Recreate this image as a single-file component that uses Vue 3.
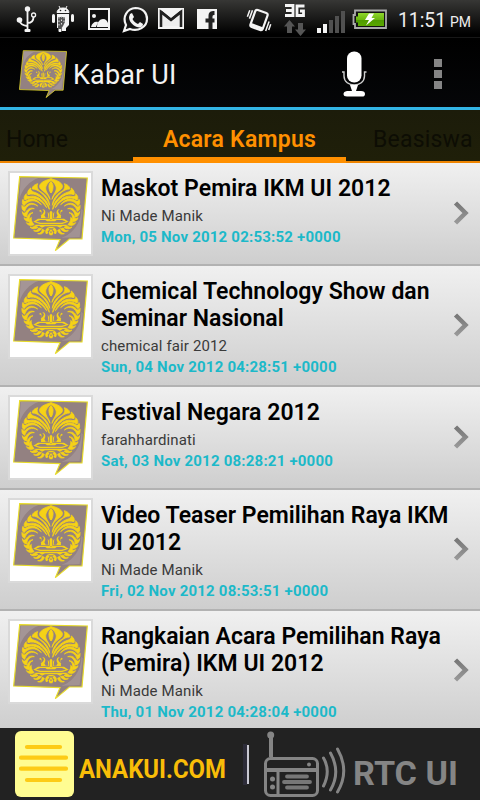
<script setup>
const items = [
  { title: ['Maskot Pemira IKM UI 2012'], author: 'Ni Made Manik', date: 'Mon, 05 Nov 2012 02:53:52 +0000' },
  { title: ['Chemical Technology Show dan', 'Seminar Nasional'], author: 'chemical fair 2012', date: 'Sun, 04 Nov 2012 04:28:51 +0000' },
  { title: ['Festival Negara 2012'], author: 'farahhardinati', date: 'Sat, 03 Nov 2012 08:28:21 +0000' },
  { title: ['Video Teaser Pemilihan Raya IKM', 'UI 2012'], author: 'Ni Made Manik', date: 'Fri, 02 Nov 2012 08:53:51 +0000' },
  { title: ['Rangkaian Acara Pemilihan Raya', '(Pemira) IKM UI 2012'], author: 'Ni Made Manik', date: 'Thu, 01 Nov 2012 04:28:04 +0000' },
]
</script>

<template>
  <div class="screen">
    <svg class="defs" width="0" height="0">
      <defs>
        <linearGradient id="chev" x1="0" y1="0" x2="0" y2="1">
          <stop offset="0" stop-color="#777" /><stop offset="1" stop-color="#999" />
        </linearGradient>
        <linearGradient id="batt" x1="0" y1="0" x2="0" y2="1">
          <stop offset="0" stop-color="#8ed62c" /><stop offset="0.5" stop-color="#6cb810" /><stop offset="0.52" stop-color="#4f9a00" /><stop offset="1" stop-color="#5aa800" />
        </linearGradient>
        <g id="half" fill="#f6d216">
          <g stroke="#f6d216" stroke-width="2.500" stroke-linejoin="round">
            <path d="M138 32C126 36 114 39 107 47C102 53 103 58 107 63C115 70 129 78 135 94C134 84 126 76 123 67C119 56 128 44 138 37Z" />
            <path d="M138 41C133 46 131 52 132 59C133 67 135 72 138 75Z" />
            <path d="M98 47C88 50 81 56 82 63C99 63 122 80 134 112C133 90 114 74 102 68C96 61 95 54 98 47Z" />
            <path d="M77 60C70 65 66 73 69 80C90 72 117 88 133 124C131 100 107 78 86 72C79 69 76 65 77 60Z" />
            <path d="M64 77C58 83 55 90 60 96C80 82 107 92 125 119C113 91 91 80 72 86C65 85 63 81 64 77Z" />
            <path d="M54 94C51 101 51 108 57 113C70 95 91 93 109 110C94 91 76 89 62 100C57 100 54 98 54 94Z" />
            <path d="M51 112C50 121 52 127 59 130C65 111 80 103 98 114C82 100 69 106 59 117C54 116 51 115 51 112Z" />
            <path d="M52 131C53 140 57 146 65 147C66 131 75 121 88 122C75 117 66 125 61 135C55 136 53 134 52 131Z" />
            <path d="M57 149C59 157 65 161 73 160C71 147 74 138 84 134C73 134 67 143 66 152C61 152 59 151 57 149Z" />
            <path d="M64 164C70 173 77 174 87 170C80 162 77 154 79 148C71 153 71 160 75 165C71 166 67 166 64 164Z" />
            <path d="M75 177C83 185 92 183 99 178L89 173C87 178 80 179 75 177Z" />
            <path d="M86 188C95 193 103 190 110 182L101 180C99 187 93 189 86 188Z" />
            <path d="M98 197C108 200 115 197 118 187L112 184C111 193 105 197 98 197Z" />
          </g>
          <path d="M105 125C101 128 105 133 109 131L108 150H132V137L128 131L130 149H122L118 142C125 132 119 121 112 124L117 129C116 136 111 140 107 142C112 134 111 126 105 125Z" />
          <path d="M138 128L134 132V154H138Z" />
          <path d="M85 161L99 152H134L138 156V160H126L121 156H105L93 161L107 164H138V168H104Z" />
          <path d="M91 170H138V175H120L111 179L103 174H91Z" />
          <path d="M138 177C127 177 125 181 122 185C119 190 122 199 126 198L130 195L128 189L134 186L130 181H138Z" />
          <path d="M138 183L134 188L131 194L134 202H138V196L135 192L138 190Z" />
        </g>
        <g id="logo">
          <path d="M44 26L247 30L231 213L193 213L151 248L165 215L26 210Z" fill="#938181" stroke="#e8dc28" stroke-width="3.5" />
          <path d="M47 30H100C74 39 51 63 43 94Z" fill="#a49596" />
          <path d="M229 122C230 163 202 200 169 209L224 207L233 127Z" fill="#a29293" />
          <use href="#half" />
          <use href="#half" transform="translate(276 0) scale(-1 1)" />
        </g>
      </defs>
    </svg>

    <header class="status">
      <svg width="480" height="38" viewBox="0 0 480 38">
        <g stroke="#f4f4f4" fill="none" stroke-width="1.8">
          <path d="M27.5 10V30M19.5 20C20 24 23 25.500 27 26M27.500 23C32 23 33.500 20 33.500 17" />
          <circle cx="33.600" cy="15" r="2" stroke-width="1.300" />
        </g>
        <g fill="#f4f4f4">
          <circle cx="27.500" cy="9" r="2.700" /><circle cx="19.500" cy="20" r="2.800" /><rect x="24.500" y="29" width="6" height="3" rx="1" />
          <path d="M57 12.500C57.500 9 60 8 63 8S68.500 9 69 12.500ZM59 6L60.500 9M67 6L65.500 9" stroke="#f4f4f4" />
          <path d="M57 14H69V25L66 28V31H62V28H57Z" />
          <rect x="52" y="14" width="3" height="9" rx="1.500" /><rect x="71" y="14" width="3" height="8" rx="1.500" /><rect x="58.500" y="27" width="3" height="5" rx="1" />
        </g>
        <path d="M58 17H65V22L63 26L61 29H58Z" fill="#555" /><path d="M59 17v10M61.500 16v10M64 17v6" stroke="#ddd" stroke-width="1" stroke-dasharray="1.5 2" />
        <circle cx="60.500" cy="10.500" r=".8" fill="#222" /><circle cx="65.500" cy="10.500" r=".8" fill="#222" />
        <rect x="89" y="9" width="20" height="20" fill="#111" stroke="#f4f4f4" stroke-width="2" />
        <circle cx="94" cy="16" r="2" fill="#f4f4f4" /><path d="M91 27C92 23 95 21 98 22L96 27ZM97 27C97 22 100 19 103 19S107 21 108 23V27Z" fill="#f4f4f4" />
        <path d="M124 31L126 25C122 17 127 8.500 135.500 8C143 8 147 13 147 19C147 27 138 32 130 29Z" fill="#151515" stroke="#f4f4f4" stroke-width="2.200" />
        <path d="M130 14L132 13L134 17L132.500 19C134 22 136 23 138 24L140 22L143 24C143 27 140 28 137 27C132 25 129 21 129 17Z" fill="#f4f4f4" />
        <rect x="158" y="8" width="26" height="21" fill="#f4f4f4" /><path d="M161 27V12L171 20L181 12V27" fill="none" stroke="#222" stroke-width="2.600" /><path d="M161 11L171 19L181 11" fill="none" stroke="#222" stroke-width="1.500" /><path d="M163 26V16L171 22L179 16V26Z" fill="#eee" />
        <rect x="197" y="9" width="20" height="20" fill="#f4f4f4" /><path d="M208.500 29V22.500H205.500V18.500H208.500V16C208.500 12 210.500 11 214.500 11V15C212.500 15 212.500 15.500 212.500 18.500H214.500V22.500H212.500V29Z" fill="#222" />
        <g transform="translate(-1 0) rotate(20 260 20)" fill="none" stroke="#f4f4f4"><rect x="253.500" y="11" width="13" height="18" rx="2" stroke-width="2.200" /><path d="M254 27H266" stroke-width="3" /><path d="M250.500 13V22M248 14V21M270 18V28M272.500 20V26" stroke-width="1.500" /></g>
        <path d="M285 5.500H293V15.500H285M286 10.500H293M304.500 6H297V15.500H303.500V11H300" fill="none" stroke="#f4f4f4" stroke-width="2.800" />
        <path d="M289.500 20L295 26.500H292V33H287V26.500H284ZM300.500 36L306 29.500H303V23H298V29.500H295Z" fill="#555" />
        <path d="M317 28h4v5h-4zM323 24h4v9h-4z" fill="#f4f4f4" /><path d="M329 20h4v13h-4zM335 16h4v17h-4zM341 11h4v22h-4z" fill="#505050" />
        <path d="M355 10.500H386V28H355V24H353.500V15H355Z" fill="#111" stroke="#aaa" stroke-width="1.800" />
        <path d="M358 13H384V26H358V22.500H356V16.500H358Z" fill="url(#batt)" /><path d="M369 13.500H374L371.500 18H375L366 25.500L369 20H365Z" fill="#fff" />
        <g fill="#eee" font-family="Roboto, sans-serif"><text x="398" y="27" font-size="20.500" textLength="48" lengthAdjust="spacingAndGlyphs">11:51</text><text x="450" y="27" font-size="14" textLength="21" lengthAdjust="spacingAndGlyphs">PM</text></g>
      </svg>
    </header>

    <div class="actionbar">
      <svg class="applogo" viewBox="24 23 225 227" preserveAspectRatio="none"><use href="#logo" /></svg>
      <h1>Kabar UI</h1>
      <svg class="mic" width="26" height="48" viewBox="0 0 26 48">
        <rect x="6" y="1.500" width="14.500" height="31" rx="7" fill="#fff" />
        <path d="M1 22H3V26C3 38 23.500 38 23.500 26V22H25.500" fill="none" stroke="#d0d0d0" stroke-width="1.400" />
        <path d="M9 35H17L15 41H20Q24 41 24 44T20 46.500H6Q2.500 46.500 2.500 44T6 41H11Z" fill="#fff" />
      </svg>
      <div class="dots"><i></i><i></i><i></i></div>
    </div>

    <nav class="tabs">
      <span class="tab home">Home</span>
      <span class="tab active">Acara Kampus</span>
      <span class="tab right">Beasiswa</span>
    </nav>

    <main class="list">
      <article v-for="item in items" :key="item.date" class="row">
        <div class="thumb"><svg width="81" height="81" viewBox="15 15 243 243"><use href="#logo" /></svg></div>
        <div class="copy">
          <h2><span v-for="line in item.title" :key="line">{{ line }}</span></h2>
          <p class="author">{{ item.author }}</p>
          <p class="date">{{ item.date }}</p>
        </div>
        <svg class="chevron" width="18" height="26" viewBox="0 0 18 26"><path d="M2.500 3L12.500 13L2.500 23" fill="none" stroke="url(#chev)" stroke-width="4.500" /></svg>
      </article>
    </main>

    <footer class="footer">
      <svg width="480" height="72" viewBox="0 0 480 72">
        <rect x="15" y="3" width="59" height="66" rx="6" fill="#fffc92" />
        <path d="M27 19H60M21 29.700H66M21 40.700H66M27 52H60" stroke="#fdcb16" stroke-width="4.200" stroke-linecap="round" />
        <text x="79" y="50" font-size="25" fill="#f9bd08" textLength="147" lengthAdjust="spacingAndGlyphs">ANAKUI.COM</text>
        <rect x="243" y="16" width="4" height="41" fill="#2d2c39" /><rect x="247" y="17" width="2" height="39" fill="#c9c9d3" />
        <g fill="none" stroke="#858585" stroke-width="3" stroke-linecap="round">
          <circle cx="270.700" cy="7" r="3.500" fill="#858585" stroke="none" /><path d="M271 9V29" stroke-width="4" stroke-linecap="butt" />
          <rect x="265.500" y="30.500" width="52" height="37" rx="5" /><path d="M266 42H317" stroke-width="4" /><path d="M278 43V67" />
          <path d="M287 48.500H307M284 54H310M287 59.500H307" stroke-width="3.800" stroke="#777" />
          <path d="M323.500 30Q331 43 323.500 58M330.500 25Q341 44 330.500 62M337.500 21Q350 43 337.500 64" />
          <g fill="#858585" stroke="none"><circle cx="309" cy="36.500" r="2" /><circle cx="272.500" cy="51" r="2.500" /><circle cx="272.500" cy="59" r="2.500" /></g>
        </g>
        <text x="353" y="57" font-size="34" fill="#858585" textLength="105" lengthAdjust="spacingAndGlyphs">RTC UI</text>
      </svg>
    </footer>
  </div>
</template>

<style>
body { margin: 0; background: #222; }
</style>

<style scoped>
.screen { width: 480px; height: 800px; overflow: hidden; display: flex; flex-direction: column; font-family: Roboto, "Noto Sans", sans-serif; background: #000; }
.defs { position: absolute; }
svg { display: block; flex: none; }
h1, h2, p { margin: 0; font-weight: 400; }
.status { height: 38px; flex: none; box-sizing: border-box; background: linear-gradient(#373735, #000 34px, #000 37px, #171717 37px); }
.actionbar { height: 69px; flex: none; display: flex; align-items: flex-start; background: linear-gradient(#000, #050608); border-bottom: 3px solid #33b5e5; }
.applogo { width: 48px; height: 48px; margin: 12px 0 0 19px; }
h1 { margin-left: 6px; width: 263px; font-size: 27px; line-height: 32px; padding-top: 21px; letter-spacing: 0.15px; color: #f3f3f3; white-space: nowrap; }
.mic { margin: 12px 0 0 5px; }
.dots { display: grid; gap: 3px; margin: 21px 0 0 67px; }
.dots i { width: 8px; height: 8px; background: #858585; }
.tabs { height: 53px; flex: none; box-sizing: border-box; display: flex; background: linear-gradient(#1c1c0a, #1f1f09); border-bottom: 2px solid #ee8400; }
.tab { font-size: 23px; line-height: 28px; padding-top: 16px; color: #0d0d04; white-space: nowrap; box-sizing: border-box; }
.home { width: 133px; padding-left: 6px; }
.active { width: 213px; height: 53px; border-bottom: 6px solid #ff9000; color: #ff9000; font-weight: 600; text-align: center; letter-spacing: 0.25px; }
.right { padding-left: 27px; letter-spacing: 0.2px; }
.list { height: 565px; overflow: hidden; flex: none; }
.row { display: flex; min-height: 103px; box-sizing: border-box; border-bottom: 2px solid #b2b2b2; background: linear-gradient(#f0f0f0, #cecece); }
.thumb { width: 81px; height: 81px; flex: none; margin: 8px 8px 0; border: 2px solid #dadada; background: #fff; }
.copy { width: 352px; padding: 12px 0 7px; }
h2 { font-size: 23px; line-height: 27px; font-weight: 600; letter-spacing: 0.03px; color: #000; white-space: nowrap; margin-bottom: 4px; }
h2 span { display: block; }
.author { font-size: 15px; line-height: 21px; letter-spacing: 0.13px; color: #3a3a3a; white-space: nowrap; }
.date { font-size: 15px; line-height: 21px; font-weight: 700; letter-spacing: 0.21px; color: #1cb9c9; white-space: nowrap; }
.chevron { align-self: center; margin-bottom: 2px; }
.footer { height: 72px; flex: none; background: #222; font-weight: 700; }
</style>
